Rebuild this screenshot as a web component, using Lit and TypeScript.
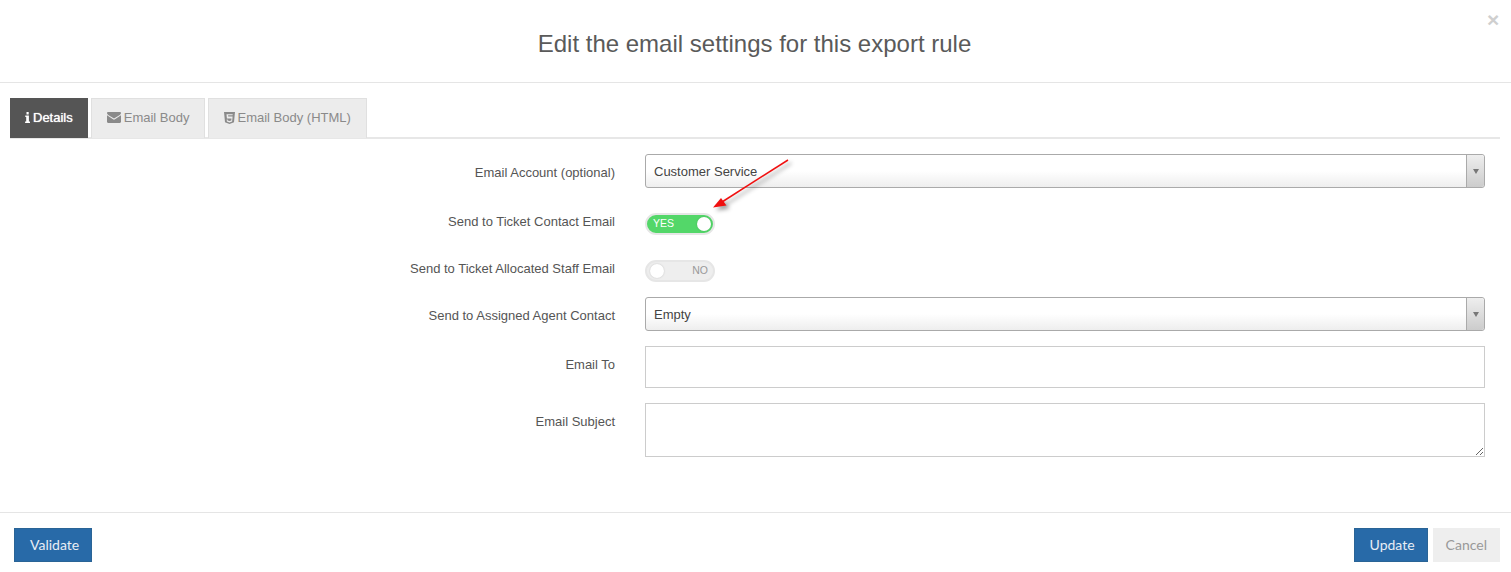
import { LitElement, html, css, svg } from "lit";
import { customElement } from "lit/decorators.js";

@customElement("app-root")
export class AppRoot extends LitElement {
  static styles = css`
    :host { display: block; position: relative; width: 1511px; height: 572px; overflow: hidden; background: #fff; font-family: "Liberation Sans", Arial, sans-serif; font-size: 13px; color: #555; }
    * { box-sizing: border-box; }
    .header { height: 83px; border-bottom: 1px solid #e5e5e5; display: flex; align-items: center; justify-content: center; padding: 5px 2px 0 0; }
    h1 { margin: 0; font-size: 24px; font-weight: 400; line-height: 30px; color: #5a5a5a; }
    .close { position: absolute; top: 9px; left: 1487px; font-size: 21px; line-height: 21px; font-weight: 700; color: #cfcfcf; }
    .body { padding: 15px 11px 0 10px; height: 429px; }
    .tabs { display: flex; gap: 3px; height: 41px; border-bottom: 2px solid #e7e7e7; }
    .tab { height: 40px; padding: 0 14px 2px 15px; display: flex; align-items: center; gap: 3px; background: #ececec; color: #8a8a8a; border: 1px solid #e0e0e0; border-bottom: 0; }
    .tab.wide { padding-right: 15px; }
    .tab.active { background: #555; color: #fff; border-color: #555; text-shadow: 0 0 1px #fff; padding: 0 14px 2px 14px; }
    .tab svg { display: block; fill: currentColor; flex: none; }
    .form { padding: 15px 15px 0 0; display: grid; grid-template-columns: 605px 840px; column-gap: 30px; row-gap: 15px; width: 1490px; }
    .label { text-align: right; padding-top: 11px; line-height: 16px; color: #555; }
    .select { height: 34px; border: 1px solid #aaa; border-radius: 3px; background: linear-gradient(#fff 50%, #eee); display: flex; align-items: center; justify-content: space-between; padding-left: 8px; color: #444; }
    .select .arrow { width: 18px; height: 100%; background: linear-gradient(#eee, #ccc); border-left: 1px solid #aaa; border-radius: 0 3px 3px 0; display: flex; align-items: center; justify-content: center; }
    .select .arrow i { width: 0; height: 0; border: 3.5px solid transparent; border-top: 5px solid #777; border-bottom: 0; }
    .toggle-cell { height: 32px; padding-top: 10px; }
    .toggle { width: 70px; height: 22px; border-radius: 11px; border: 2px solid #e6e6e6; background: #eee; position: relative; font-size: 10.500px; line-height: 17px; color: #999; text-align: right; padding-right: 5px; }
    .toggle::after { content: ""; position: absolute; top: 2px; left: 3px; width: 14px; height: 14px; border-radius: 50%; background: #fff; box-shadow: 0 0 2px rgba(0,0,0,.18); }
    .toggle.on { background: #53d769; color: #fff; text-align: left; padding: 0 0 0 6px; }
    .toggle.on::after { left: auto; right: 2px; }
    .input { display: block; width: 840px; height: 42px; border: 1px solid #ccc; background: #fff; margin: 0; padding: 6px 12px; font: inherit; outline: 0; }
    textarea.input { height: 54px; }
    .footer { height: 60px; border-top: 1px solid #e5e5e5; padding: 15px 11px 0 14px; display: flex; justify-content: space-between; align-items: flex-start; }
    .actions { display: flex; gap: 5px; }
    button { height: 34px; font-family: Lato, sans-serif; font-size: 14px; padding: 0 12px 1px 15px; margin: 0; border: 1px solid #2a6496; border-radius: 0; background: #286aa8; color: #e8eef5; cursor: pointer; }
    button.cancel { background: #eee; border-color: #eee; color: #999; padding: 0 12px 1px; }
    .annot { position: absolute; left: 0; top: 0; pointer-events: none; }
    .arrow-mark { filter: drop-shadow(3px 3px 2px rgba(0,0,0,.4)); }
  `;

  private icon(w: number, h: number, body: unknown) {
    return html`<svg width=${w} height=${h} viewBox="0 0 ${w} ${h}">${body}</svg>`;
  }

  render() {
    return html`
      <div class="header"><h1>Edit the email settings for this export rule</h1></div>
      <span class="close">×</span>
      <div class="body">
        <div class="tabs">
          <div class="tab active">
            ${this.icon(5, 11, svg`<path d="M1.5 0h2.2v2.4H1.5zM.3 3.6h3.6v5.9H5V11H.1V9.5h1.1V5.1H.3z"/>`)}
            <span>Details</span>
          </div>
          <div class="tab">
            ${this.icon(14, 11, svg`<path d="M1.2 0h11.6c.7 0 1.2.5 1.2 1.1 0 .8-.6 1.3-1.2 1.8L7 6.6 1.2 2.9C.6 2.4 0 1.9 0 1.1 0 .5.5 0 1.2 0zM0 3.2l6.4 4.3c.4.2.8.2 1.2 0L14 3.2v6.6c0 .7-.5 1.2-1.2 1.2H1.2C.5 11 0 10.500 0 9.800z"/>`)}
            <span>Email Body</span>
          </div>
          <div class="tab wide">
            ${this.icon(11, 12, svg`<path fill-rule="evenodd" d="M0 0h11l-1 10.300L5.500 12 1 10.300zM2.500 2.300l.4 4.200h4.600l-.2 1.900-1.800.6-1.800-.6-.1-1H2.700l.2 2.200 2.600 1 2.600-1 .5-5.200H4.200l-.1-1.100h4.500l.1-1z"/>`)}
            <span>Email Body (HTML)</span>
          </div>
        </div>
        <div class="form">
          <div class="label">Email Account (optional)</div>
          <div class="select"><span>Customer Service</span><span class="arrow"><i></i></span></div>
          <div class="label">Send to Ticket Contact Email</div>
          <div class="toggle-cell"><div class="toggle on">YES</div></div>
          <div class="label">Send to Ticket Allocated Staff Email</div>
          <div class="toggle-cell"><div class="toggle">NO</div></div>
          <div class="label">Send to Assigned Agent Contact</div>
          <div class="select"><span>Empty</span><span class="arrow"><i></i></span></div>
          <div class="label">Email To</div>
          <input class="input" />
          <div class="label">Email Subject</div>
          <textarea class="input"></textarea>
        </div>
      </div>
      <div class="footer">
        <button>Validate</button>
        <div class="actions"><button>Update</button><button class="cancel">Cancel</button></div>
      </div>
      <svg class="annot" width="1511" height="572" viewBox="0 0 1511 572">
        <g class="arrow-mark">
          <path d="M788 160 L722 202" stroke="#f01010" stroke-width="1.500" fill="none"/>
          <path d="M713 207.500 L721 198 L726.500 205.500 Z" fill="#f01010"/>
        </g>
      </svg>
    `;
  }
}
